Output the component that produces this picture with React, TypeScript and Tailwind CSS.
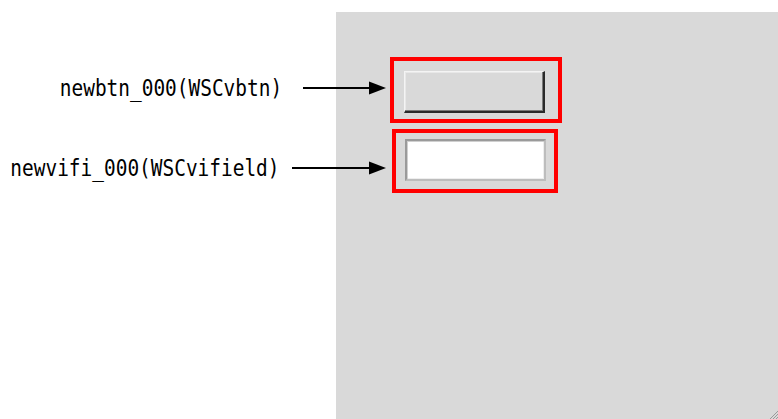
import React from 'react';

function Arrow({ width }: { width: number }) {
  return (
    <svg width={width} height={14} viewBox={`0 0 ${width} 14`} className="block shrink-0">
      <rect x={0} y={6} width={width - 14} height={2} fill="#000" />
      <polygon points={`${width - 17},0.5 ${width},7 ${width - 17},13.5`} fill="#000" />
    </svg>
  );
}

function Callout({ label, gap, arrow }: { label: string; gap: number; arrow: number }) {
  return (
    <div className="flex h-6 w-[386px] items-center justify-end">
      <span
        className="inline-block origin-right scale-x-[0.845] whitespace-pre text-[23px] leading-6 text-black"
        style={{ marginRight: gap }}
      >
        {label}
      </span>
      <Arrow width={arrow} />
    </div>
  );
}

export default function App() {
  return (
    <div className="relative h-[419px] w-[778px] overflow-hidden bg-white font-['DejaVu_Sans_Mono',monospace]">
      {/* design canvas */}
      <div className="ml-[336px] mt-3 flex h-[407px] flex-col gap-[6px] bg-[#d9d9d9] pt-[45px]">
        <div className="ml-[54px] h-[66px] w-[172px] border-4 border-[#ff0000] pl-[10px] pt-[10px]">
          <div className="h-[42px] w-[141px] border border-b-2 border-r-2 border-t-[#f4f4f4] border-l-[#f4f4f4] border-b-[#2a2a2a] border-r-[#2a2a2a] bg-[#d9d9d9] shadow-[inset_-1px_-1px_0_#7a7a7a,inset_1px_1px_0_#e8e8e8]" />
        </div>
        <div className="ml-[56px] h-[64px] w-[166px] border-4 border-[#ff0000] pl-[9px] pt-[6px]">
          <div className="h-[42px] w-[141px] border-2 border-t-[#9a9a9a] border-l-[#9a9a9a] border-b-[#bdbdbd] border-r-[#bdbdbd] bg-white shadow-[inset_1px_1px_0_#cfcfcf,inset_-1px_-1px_0_#eeeeee]" />
        </div>
        <div className="mt-auto flex justify-end">
          <svg width={9} height={9} viewBox="0 0 9 9" className="block">
            <path d="M9 1 L1 9 M9 4 L4 9 M9 7 L7 9" stroke="#9a9a9a" strokeWidth={1} />
          </svg>
        </div>
      </div>

      {/* annotations over the canvas */}
      <div className="absolute inset-0 flex flex-col gap-[56px] pt-[76px]">
        <Callout label="newbtn_000(WSCvbtn)" gap={21} arrow={83} />
        <Callout label="newvifi_000(WSCvifield)" gap={13} arrow={94} />
      </div>
    </div>
  );
}
